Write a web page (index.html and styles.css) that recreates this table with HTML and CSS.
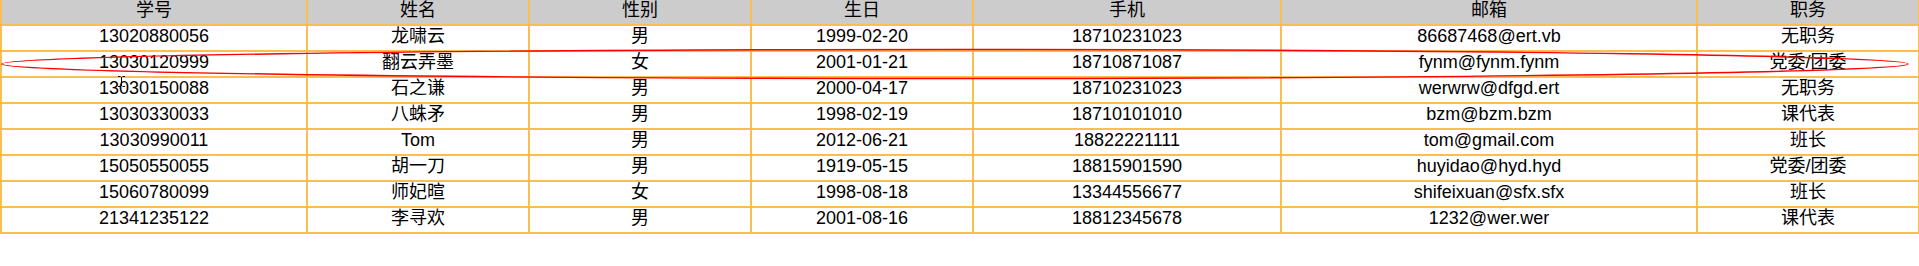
FILE: index.html
```html
<!DOCTYPE html>
<html lang="zh-CN">
<head>
<meta charset="utf-8">
<title>学生列表</title>
<link rel="stylesheet" href="styles.css">
</head>
<body>
<div class="page">
  <table class="students">
    <colgroup>
      <col class="c-id"><col class="c-name"><col class="c-sex"><col class="c-birth"><col class="c-phone"><col class="c-mail"><col class="c-duty">
    </colgroup>
    <thead>
      <tr><th>学号</th><th>姓名</th><th>性别</th><th>生日</th><th>手机</th><th>邮箱</th><th>职务</th></tr>
    </thead>
    <tbody>
      <tr><td>13020880056</td><td>龙啸云</td><td>男</td><td>1999-02-20</td><td>18710231023</td><td>86687468@ert.vb</td><td>无职务</td></tr>
      <tr><td>13030120999</td><td>翻云弄墨</td><td>女</td><td>2001-01-21</td><td>18710871087</td><td>fynm@fynm.fynm</td><td>党委/团委</td></tr>
      <tr><td>13030150088</td><td>石之谦</td><td>男</td><td>2000-04-17</td><td>18710231023</td><td>werwrw@dfgd.ert</td><td>无职务</td></tr>
      <tr><td>13030330033</td><td>八蛛矛</td><td>男</td><td>1998-02-19</td><td>18710101010</td><td>bzm@bzm.bzm</td><td>课代表</td></tr>
      <tr><td>13030990011</td><td>Tom</td><td>男</td><td>2012-06-21</td><td>18822221111</td><td>tom@gmail.com</td><td>班长</td></tr>
      <tr><td>15050550055</td><td>胡一刀</td><td>男</td><td>1919-05-15</td><td>18815901590</td><td>huyidao@hyd.hyd</td><td>党委/团委</td></tr>
      <tr><td>15060780099</td><td>师妃暄</td><td>女</td><td>1998-08-18</td><td>13344556677</td><td>shifeixuan@sfx.sfx</td><td>班长</td></tr>
      <tr><td>21341235122</td><td>李寻欢</td><td>男</td><td>2001-08-16</td><td>18812345678</td><td>1232@wer.wer</td><td>课代表</td></tr>
    </tbody>
  </table>
  <svg class="mark" width="1919" height="100" viewBox="0 0 1919 100" aria-hidden="true">
    <ellipse cx="955" cy="64" rx="953" ry="14.5" fill="none" stroke="#f00" stroke-width="1.4"/>
  </svg>
  <svg class="ibeam" width="9" height="11" viewBox="0 0 9 11" aria-hidden="true">
    <path d="M1 0.5h2.5M5.5 0.5h2.5M4.5 1v9M1 10.5h2.5M5.5 10.5h2.5" stroke="#000" stroke-width="1" fill="none"/>
  </svg>
</div>
</body>
</html>
```
FILE: styles.css
```css
html, body {
  margin: 0;
  padding: 0;
  background: #fff;
  overflow: hidden;
}

.page {
  position: relative;
  width: 1920px;
  height: 266px;
}

.students {
  border-collapse: collapse;
  table-layout: fixed;
  width: 1920px;
  font-family: "Liberation Sans", Arial, "Noto Sans CJK SC", sans-serif;
  font-size: 18px;
  color: #000;
}

.c-id { width: 306px; }
.c-name { width: 222px; }
.c-sex { width: 222px; }
.c-birth { width: 222px; }
.c-phone { width: 308px; }
.c-mail { width: 416px; }
.c-duty { width: 222px; }

.students th,
.students td {
  border: 2px solid #fdbe4f;
  padding: 0 0 4px;
  line-height: 20px;
  text-align: center;
  white-space: nowrap;
  overflow: hidden;
}

.students th {
  background: #cccccc;
  font-weight: normal;
  border-top: 0;
}

.mark {
  position: absolute;
  left: 0;
  top: 0;
  pointer-events: none;
}

.ibeam {
  position: absolute;
  left: 117px;
  top: 76px;
}
```
